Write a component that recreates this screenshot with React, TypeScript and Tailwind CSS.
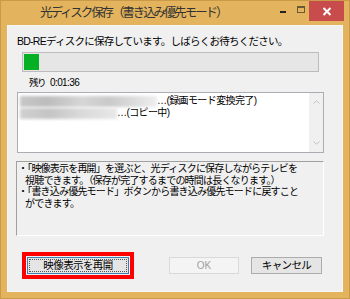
import React from "react";

const jp = { fontFamily: '"Liberation Sans", "Noto Sans CJK JP", sans-serif' };

export default function App() {
  return (
    <div
      className="w-[350px] h-[299px] bg-[#e3b35d] border border-[#c99a47] flex flex-col text-black overflow-hidden"
      style={jp}
    >
      {/* Title bar */}
      <div className="h-[24px] shrink-0 flex items-start relative">
        <div className="flex-1 pl-[39px] pt-[3px] text-[12.5px] leading-[18px] tracking-[-2.1px] text-[#333333] whitespace-nowrap">
          光ディスク保存（書き込み優先モード）
        </div>
        <div className="flex items-start">
          <div className="w-[22px] h-[20px] flex items-center justify-center">
            <div className="w-[6px] h-[2px] bg-[#222] mt-[2px]" />
          </div>
          <div className="w-[14px] h-[20px] flex items-start justify-center pt-[5px]">
            <div className="w-[8px] h-[7px] border border-[#6b5a3a] border-t-2" />
          </div>
          <div className="w-[35px] h-[20px] bg-[#c84c4c] flex items-center justify-center mr-[5px] ml-[1px]">
            <svg width="10" height="9" viewBox="0 0 10 9">
              <path d="M1.5 1 L8.5 8 M8.5 1 L1.5 8" stroke="#fff" strokeWidth="2" />
            </svg>
          </div>
        </div>
      </div>
      {/* Client */}
      <div className="mx-[6px] mb-[6px] flex-1 bg-[#f0f0f0] border border-[#f7f7f7] flex flex-col">
        <div className="shrink-0 pl-[9px] pt-[9px] text-[10.5px] leading-[13px] tracking-[-0.75px] whitespace-nowrap">
          BD-REディスクに保存しています。しばらくお待ちください。
        </div>
        <div className="shrink-0 ml-[14px] mt-[4px] w-[297px] h-[20px] border border-[#bcbcbc] bg-[#e6e6e6] p-[1px]">
          <div className="w-[15px] h-full bg-[#06b025]" />
        </div>
        <div className="shrink-0 flex items-center pl-[21px] mt-[5px] h-[12px] text-[10px] leading-[12px] whitespace-nowrap">
          <span className="tracking-[-1.5px] text-[9.5px]">残り</span>
          <span className="ml-[5px] tracking-[-0.6px]">0:01:36</span>
        </div>
        <div className="shrink-0 ml-[9px] mt-[3px] w-[307px] h-[61px] bg-white border border-[#abadb3] flex">
          <div className="flex-1 pt-[2px] text-[10px] leading-[12px] tracking-[-0.6px] whitespace-nowrap">
            <div className="flex items-center">
              <div className="ml-[2px] w-[137px] h-[11px] bg-[linear-gradient(90deg,#c7c7c7,#bcbcbc_20%,#d6d6d6_45%,#c9c9c9_65%,#dedede_85%,#eeeeee)] blur-[1.5px]" />
              <span>…(録画モード変換完了)</span>
            </div>
            <div className="flex items-center">
              <div className="ml-[2px] w-[97px] h-[11px] bg-[linear-gradient(90deg,#d0d0d0,#c4c4c4_30%,#d8d8d8_60%,#e8e8e8)] blur-[1.5px]" />
              <span>…(コピー中)</span>
            </div>
          </div>
          <div className="w-[14px] bg-[#f0f0f0] flex flex-col items-center justify-between py-[7px]">
            <svg width="7" height="4" viewBox="0 0 7 4">
              <path d="M0.5 3.5 L3.5 0.8 L6.5 3.5" stroke="#c0c0c0" fill="none" />
            </svg>
            <svg width="7" height="4" viewBox="0 0 7 4">
              <path d="M0.5 0.5 L3.5 3.2 L6.5 0.5" stroke="#c0c0c0" fill="none" />
            </svg>
          </div>
        </div>
        <div className="flex-1 ml-[8px] mt-[8px] w-[308px] bg-[#f0f0f0] border border-t-[#a0a0a0] border-l-[#a0a0a0] border-r-white border-b-white pl-[1px] pt-[1px] text-[10px] leading-[11.5px] tracking-[-0.8px] whitespace-nowrap">
          <div>・「映像表示を再開」を選ぶと、光ディスクに保存しながらテレビを</div>
          <div className="pl-[7px]">視聴できます。（保存が完了するまでの時間は長くなります。）</div>
          <div>・「書き込み優先モード」ボタンから書き込み優先モードに戻すこと</div>
          <div className="pl-[7px]">ができます。</div>
        </div>
        <div className="shrink-0 flex items-center mt-[16px] mb-[12px]">
          <div className="ml-[14px] border-[4px] border-[#ff0000] p-[1px]">
            <div className="w-[102px] h-[17px] bg-[#e5e5e5] border border-[#3c7fb1] outline-1 outline-dotted outline-[#555] outline-offset-[-3px] flex items-center justify-center text-[10.5px] tracking-[-0.6px]">
              映像表示を再開
            </div>
          </div>
          <div className="ml-[35px] w-[70px] h-[17px] bg-[#f4f4f4] border border-[#d9d9d9] flex items-center justify-center text-[10px] text-[#a0a0a0]">
            OK
          </div>
          <div className="ml-[12px] w-[71px] h-[17px] bg-[#e5e5e5] border border-[#acacac] flex items-center justify-center text-[10.5px] tracking-[-0.6px]">
            キャンセル
          </div>
        </div>
      </div>
    </div>
  );
}
